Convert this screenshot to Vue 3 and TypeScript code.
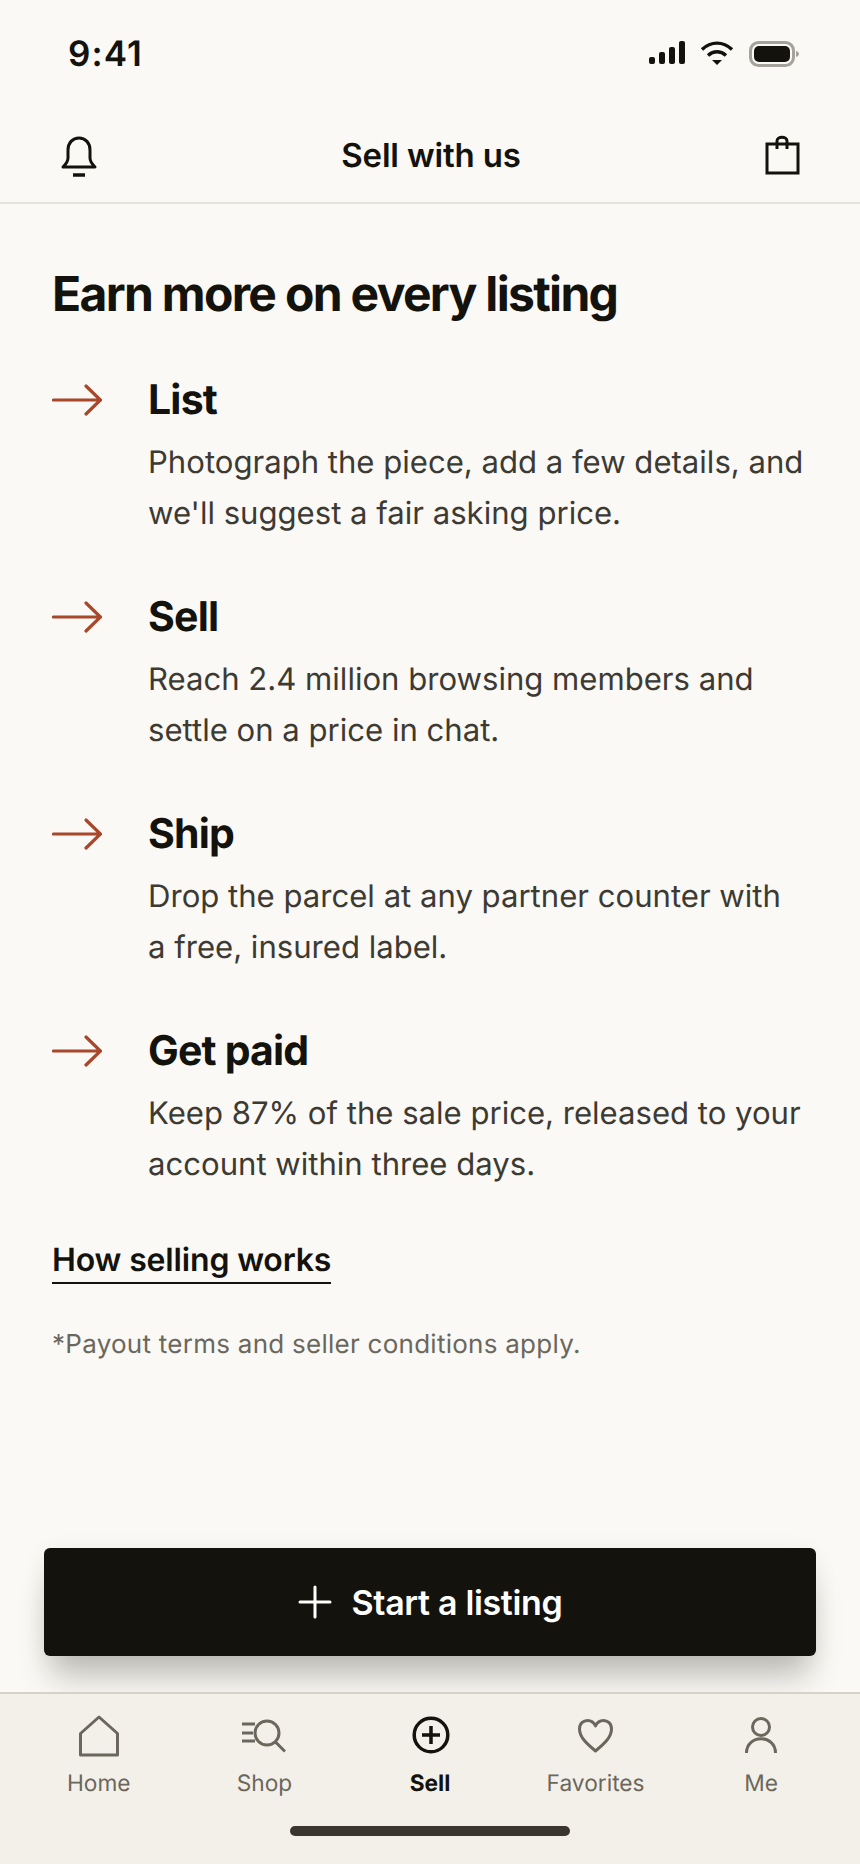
<template>
  <div class="screen">
    <div class="status">
      <span class="status__time">9:41</span>
      <div class="status__icons">
        <svg width="36" height="24" viewBox="0 0 36 24" fill="#14120d">
          <rect x="0" y="16" width="6" height="7" rx="2" />
          <rect x="10" y="11" width="6" height="12" rx="2" />
          <rect x="20" y="6" width="6" height="17" rx="2" />
          <rect x="30" y="0" width="6" height="23" rx="2" />
        </svg>
        <svg width="34" height="24" viewBox="0 0 34 24" fill="none" stroke="#14120d" stroke-width="3.4">
          <path d="M2 8.5C11 0 23 0 32 8.5" />
          <path d="M8 14.5C13.5 9.5 20.5 9.5 26 14.5" />
          <path d="M12 19h10l-5 5z" fill="#14120d" stroke="none" />
        </svg>
        <svg width="50" height="26" viewBox="0 0 50 26">
          <rect x="1.5" y="1.5" width="43" height="23" rx="8" fill="none" stroke="#a5a29b" stroke-width="3" />
          <rect x="5" y="5" width="36" height="16" rx="5" fill="#14120d" />
          <path d="M47 10c2 .6 3 1.6 3 3s-1 2.400-3 3z" fill="#a5a29b" />
        </svg>
      </div>
    </div>

    <header class="topbar">
      <svg class="topbar__bell" width="38" height="42" viewBox="0 0 38 42" fill="none" stroke="#14120d" stroke-width="3">
        <path d="M3 31c3-3 5-5 5-9v-8C8 7 12.500 2 19 2s11 5 11 12v8c0 4 2 6 5 9z" stroke-linejoin="round" />
        <path d="M13 39h12" stroke-width="3.500" />
      </svg>
      <h1 class="topbar__title">Sell with us</h1>
      <svg class="topbar__bag" width="36" height="40" viewBox="0 0 36 40" fill="none" stroke="#14120d" stroke-width="3">
        <rect x="3" y="9" width="31" height="29" />
        <path d="M13 14V6c0-5 10-5 10 0v8" />
      </svg>
    </header>

    <main class="content">
      <h2 class="content__heading">Earn more on every listing</h2>
      <ul class="steps">
        <li v-for="step in steps" :key="step.title" class="step">
          <svg class="step__arrow" width="50" height="32" viewBox="0 0 50 32" fill="none" stroke="#a8472a" stroke-width="3.2" stroke-linecap="round">
            <path d="M1.500 16h47M34 2l14.500 14L34 30" />
          </svg>
          <div>
            <h3 class="step__title">{{ step.title }}</h3>
            <p class="step__text">{{ step.text }}</p>
          </div>
        </li>
      </ul>
      <a class="content__link">How selling works</a>
      <p class="content__note">*Payout terms and seller conditions apply.</p>
    </main>

    <div class="cta-wrap">
      <button class="cta">
        <svg width="34" height="34" viewBox="0 0 34 34" stroke="#fff" stroke-width="3" stroke-linecap="round">
          <path d="M17 2v30M2 17h30" />
        </svg>
        Start a listing
      </button>
    </div>

    <nav class="tabs">
      <div v-for="tab in tabs" :key="tab.label" class="tab" :class="{ 'tab--active': tab.active }">
        <svg class="tab__icon" width="44" height="44" viewBox="0 0 44 44" fill="none" stroke="currentColor" stroke-width="3">
          <template v-if="tab.label === 'Home'">
            <path d="M3.500 20.500 22 4l18.500 16.500V42h-37z" stroke-linejoin="round" />
          </template>
          <template v-else-if="tab.label === 'Shop'">
            <circle cx="25" cy="20" r="12" />
            <path d="M33.500 29 43 38.500M0 11h13M0 20h11M0 28h13" />
          </template>
          <template v-else-if="tab.label === 'Sell'">
            <circle cx="23" cy="22" r="16.800" stroke-width="3.500" />
            <path d="M23 13v18M14 22h18" stroke-width="3.500" />
          </template>
          <template v-else-if="tab.label === 'Favorites'">
            <path d="M21.500 38C12 30 5.500 24 5.500 16c0-5.500 3.800-8.500 8-8.500 3.500 0 6.400 2 8 5.500 1.600-3.500 4.500-5.500 8-5.500 4.200 0 8 3 8 8.500 0 8-6.500 14-16 22z" stroke-linejoin="round" />
          </template>
          <template v-else>
            <circle cx="22" cy="14" r="8.500" />
            <path d="M7.500 40c0-19 29-19 29 0" />
          </template>
        </svg>
        <span class="tab__label">{{ tab.label }}</span>
      </div>
      <div class="tabs__home"></div>
    </nav>
  </div>
</template>

<script setup lang="ts">
interface Step {
  title: string;
  text: string;
}

interface Tab {
  label: string;
  active?: boolean;
}

const steps: Step[] = [
  { title: "List", text: "Photograph the piece, add a few details, and we'll suggest a fair asking price." },
  { title: "Sell", text: "Reach 2.4 million browsing members and settle on a price in chat." },
  { title: "Ship", text: "Drop the parcel at any partner counter with a free, insured label." },
  { title: "Get paid", text: "Keep 87% of the sale price, released to your account within three days." },
];

const tabs: Tab[] = [
  { label: "Home" },
  { label: "Shop" },
  { label: "Sell", active: true },
  { label: "Favorites" },
  { label: "Me" },
];
</script>

<style>
html,
body {
  margin: 0;
  background: #faf9f5;
}
</style>

<style scoped>
.screen {
  width: 860px;
  height: 1864px;
  display: flex;
  flex-direction: column;
  overflow: hidden;
  background: #faf9f5;
  color: #14120d;
  font-family: Inter, "Liberation Sans", sans-serif;
  text-rendering: geometricPrecision;
}
.status {
  height: 108px;
  box-sizing: border-box;
  padding: 32px 61px 0 68px;
  display: flex;
  justify-content: space-between;
  align-items: flex-start;
}
.status__time {
  font-size: 35px;
  font-weight: 600;
  line-height: 44px;
  letter-spacing: 0.03em;
}
.status__icons {
  display: flex;
  gap: 15px;
  padding-top: 9px;
  align-items: flex-start;
}
.topbar {
  height: 96px;
  box-sizing: border-box;
  padding: 0 60px;
  display: flex;
  align-items: center;
  justify-content: space-between;
  border-bottom: 2px solid #e6e3dc;
}
.topbar__bell {
  margin-top: 3px;
}
.topbar__title {
  margin: 0;
  font-size: 33px;
  font-weight: 600;
  letter-spacing: -0.005em;
}
.content {
  flex: 1;
  padding: 0 55px 0 52px;
}
.content__heading {
  margin: 61px 0 0;
  font-size: 48px;
  line-height: 58px;
  font-weight: 700;
  letter-spacing: -0.035em;
}
.steps {
  list-style: none;
  margin: 47px 0 0;
  padding: 0;
}
.step {
  display: grid;
  grid-template-columns: 96px 1fr;
  margin-bottom: 47.6px;
}
.step__arrow {
  margin-top: 14px;
}
.step__title {
  margin: 0 0 9px;
  font-size: 41px;
  line-height: 58px;
  font-weight: 700;
  letter-spacing: -0.02em;
}
.step__text {
  margin: 0;
  font-size: 31.1px;
  line-height: 51.15px;
  color: #3d3a33;
}
.content__link {
  display: inline-block;
  font-size: 32px;
  line-height: 44px;
  font-weight: 600;
  letter-spacing: -0.005em;
  border-bottom: 2px solid #14120d;
}
.content__note {
  margin: 41px 0 0;
  font-size: 26px;
  line-height: 40px;
  letter-spacing: 0.01em;
  color: #6b675c;
}
.cta-wrap {
  padding: 0 44px 36px;
}
.cta {
  width: 100%;
  height: 108px;
  border: 0;
  border-radius: 6px;
  background: #14120d;
  color: #fff;
  font-family: inherit;
  font-size: 34px;
  font-weight: 600;
  letter-spacing: -0.01em;
  display: flex;
  align-items: center;
  justify-content: center;
  gap: 20px;
  box-shadow: 0 28px 32px -8px rgba(20, 18, 13, 0.25), 0 4px 24px rgba(20, 18, 13, 0.06);
}
.tabs {
  position: relative;
  height: 172px;
  box-sizing: border-box;
  padding: 19px 16px 0;
  display: grid;
  grid-template-columns: repeat(5, 1fr);
  align-items: start;
  background: #f3f0ea;
  border-top: 2px solid #d5d2ca;
}
.tab {
  display: flex;
  flex-direction: column;
  align-items: center;
  gap: 12px;
  color: #6b675c;
}
.tab--active {
  color: #14120d;
}
.tab__label {
  font-size: 22.7px;
  line-height: 30px;
}
.tab--active .tab__label {
  font-weight: 700;
}
.tabs__home {
  position: absolute;
  left: 290px;
  bottom: 28px;
  width: 280px;
  height: 10px;
  border-radius: 5px;
  background: #3a362f;
}
</style>
